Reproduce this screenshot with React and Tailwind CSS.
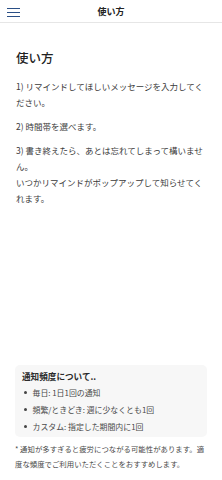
import React from 'react'

const steps = [
  '1) リマインドしてほしいメッセージを入力してください。',
  '2) 時間帯を選べます。',
]

const freq = [
  '毎日: 1日1回の通知',
  '頻繁/ときどき: 週に少なくとも1回',
  'カスタム: 指定した期間内に1回',
]

function Header() {
  return (
    <header className="relative flex h-[23px] shrink-0 items-center justify-center border-b border-[#e6e6e6] bg-white">
      <button className="absolute left-[7px] top-[8px] flex h-[9px] w-[13px] flex-col justify-between">
        <span className="block h-[1.4px] w-full bg-[#2a4f86]" />
        <span className="block h-[1.4px] w-full bg-[#2a4f86]" />
        <span className="block h-[1.4px] w-full bg-[#2a4f86]" />
      </button>
      <div className="text-[9px] font-bold leading-none text-[#222]">使い方</div>
    </header>
  )
}

export default function App() {
  return (
    <div
      className="flex h-[480px] w-[222px] flex-col overflow-hidden bg-white"
      style={{ fontFamily: '"Noto Sans CJK JP", "Noto Sans", sans-serif' }}
    >
      <Header />

      <main className="flex flex-1 flex-col px-[16px] pt-[25px] pb-[9px]">
        <h1 className="text-[12.5px] font-medium leading-[20px] text-[#222]">使い方</h1>

        <div className="mt-[10px] text-[8.5px] leading-[16px] text-[#3a3a3a]">
          {steps.map((s) => (
            <p key={s} className="mb-[8px]">{s}</p>
          ))}
          <p>
            3) 書き終えたら、あとは忘れてしまって構いません。
            <br />
            いつかリマインドがポップアップして知らせてくれます。
          </p>
        </div>

        <div className="mt-auto">
          <div className="-mx-[1px] rounded-[5px] bg-[#f7f7f7] px-[7px] pt-[4px] pb-[2px]">
            <div className="text-[8.6px] font-bold leading-[14px] text-[#2a2a2a]">通知頻度について..</div>
            <ul className="mt-[1px]">
              {freq.map((f) => (
                <li key={f} className="flex items-center text-[7.9px] leading-[17px] text-[#4a4a4a]">
                  <span className="ml-[2px] mr-[6px] block h-[2.5px] w-[2.5px] rounded-full bg-[#444]" />
                  {f}
                </li>
              ))}
            </ul>
          </div>
          <p className="mt-[4px] -mx-[1px] text-[7.4px] leading-[15px] text-[#4a4a4a]">
            * 通知が多すぎると疲労につながる可能性があります。適度な頻度でご利用いただくことをおすすめします。
          </p>
        </div>
      </main>
    </div>
  )
}
